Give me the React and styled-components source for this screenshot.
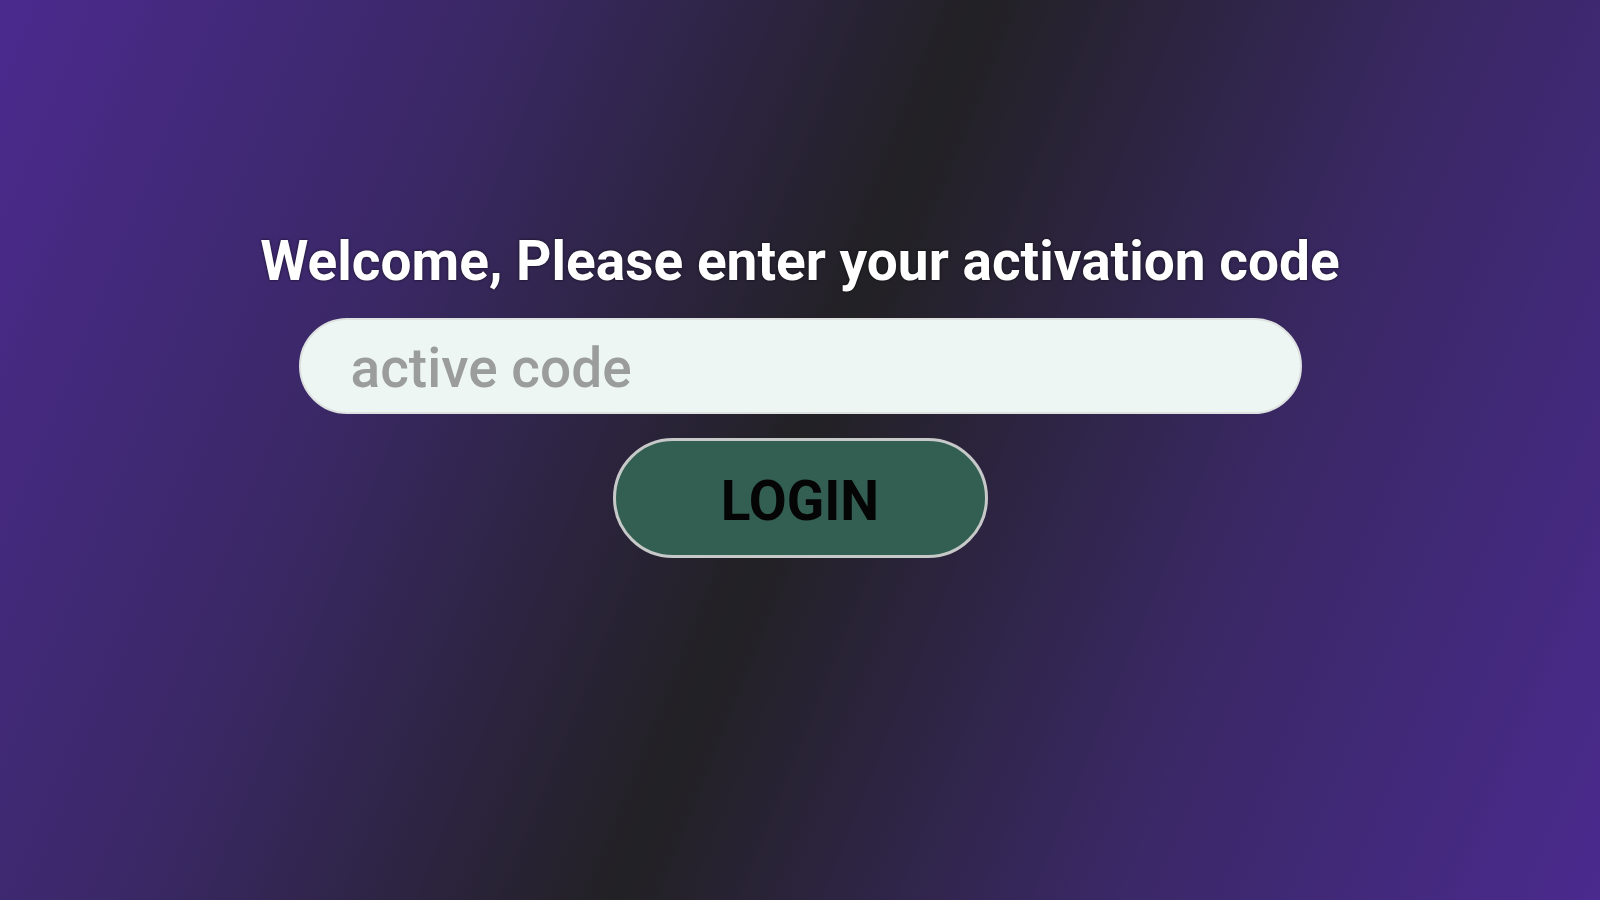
import React, { useState } from "react";
import styled, { createGlobalStyle } from "styled-components";

const GlobalStyle = createGlobalStyle`
  html, body {
    margin: 0;
    padding: 0;
  }
  body {
    font-family: Roboto, "Liberation Sans", Arial, sans-serif;
  }
  * {
    box-sizing: border-box;
  }
`;

const Page = styled.div`
  min-height: 100vh;
  width: 100%;
  display: flex;
  flex-direction: column;
  align-items: center;
  padding-top: 228px;
  background: linear-gradient(
    112deg,
    #4b2a8e 0%,
    #3a2866 25%,
    #222124 50%,
    #3a2866 75%,
    #4a2a8e 100%
  );
`;

const Title = styled.h1`
  margin: 0;
  font-size: 55px;
  line-height: 66px;
  font-weight: 700;
  color: #ffffff;
  text-shadow: 0 0 3px rgba(0, 0, 0, 0.7);
  white-space: nowrap;
`;

const Form = styled.form`
  display: flex;
  flex-direction: column;
  align-items: center;
  gap: 24px;
  margin-top: 24px;
`;

const CodeInput = styled.input`
  width: 1003px;
  height: 96px;
  padding: 4px 50px 0;
  border: 2px solid #dde1e0;
  border-radius: 48px;
  background: #eef6f3;
  font-family: Roboto, "Liberation Sans", Arial, sans-serif;
  font-size: 55px;
  font-weight: 500;
  color: #333;
  outline: none;

  &::placeholder {
    color: #9a9d9c;
  }
`;

const LoginButton = styled.button`
  width: 375px;
  height: 120px;
  padding: 6px 0 0;
  border: 3px solid #c6c9c8;
  border-radius: 60px;
  background: #335f53;
  color: #050505;
  font-family: Roboto, "Liberation Sans", Arial, sans-serif;
  font-size: 55px;
  font-weight: 700;
  cursor: pointer;
`;

export default function App() {
  const [code, setCode] = useState("");

  const submit = e => {
    e.preventDefault();
  };

  return (
    <>
      <GlobalStyle />
      <Page>
        <Title>Welcome, Please enter your activation code</Title>
        <Form onSubmit={submit}>
          <CodeInput
            placeholder="active code"
            value={code}
            onChange={e => setCode(e.target.value)}
          />
          <LoginButton type="submit">LOGIN</LoginButton>
        </Form>
      </Page>
    </>
  );
}
